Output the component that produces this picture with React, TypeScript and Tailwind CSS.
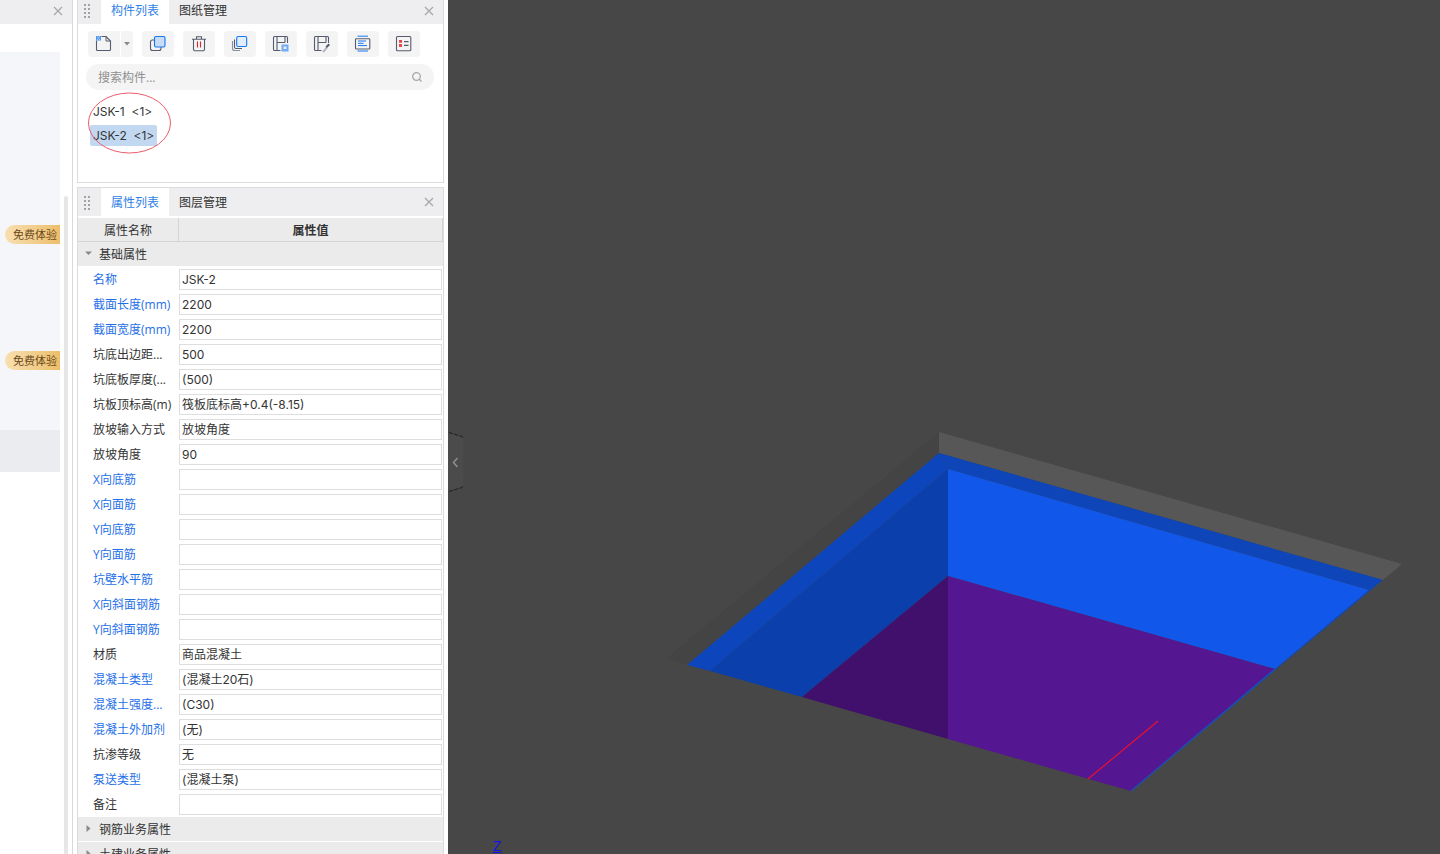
import React from "react";

const FONT = { fontFamily: '"Open Sans", "Noto Sans CJK SC", sans-serif' };
const VALUE_FONT = { fontFamily: 'Inter, "Noto Sans CJK SC", sans-serif' };

const rows: [string, string, boolean][] = [
  ["名称", "JSK-2", true],
  ["截面长度(mm)", "2200", true],
  ["截面宽度(mm)", "2200", true],
  ["坑底出边距...", "500", false],
  ["坑底板厚度(...", "(500)", false],
  ["坑板顶标高(m)", "筏板底标高+0.4(-8.15)", false],
  ["放坡输入方式", "放坡角度", false],
  ["放坡角度", "90", false],
  ["X向底筋", "", true],
  ["X向面筋", "", true],
  ["Y向底筋", "", true],
  ["Y向面筋", "", true],
  ["坑壁水平筋", "", true],
  ["X向斜面钢筋", "", true],
  ["Y向斜面钢筋", "", true],
  ["材质", "商品混凝土", false],
  ["混凝土类型", "(混凝土20石)", true],
  ["混凝土强度...", "(C30)", true],
  ["混凝土外加剂", "(无)", true],
  ["抗渗等级", "无", false],
  ["泵送类型", "(混凝土泵)", true],
  ["备注", "", false],
];

const S = "#565c6e";
const B = "#1677ee";

function Close() {
  return (
    <svg width="10" height="10" viewBox="0 0 10 10" className="shrink-0">
      <path d="M1 1L9 9M9 1L1 9" stroke="#a6a6a6" strokeWidth="1.2" />
    </svg>
  );
}

function Grip() {
  return (
    <svg width="6" height="14" viewBox="0 0 6 14" className="shrink-0">
      {[0, 4, 8, 12].map((y) =>
        [0, 4].map((x) => <rect key={`${x}-${y}`} x={x} y={y} width="2" height="2" fill="#a3a3a3" />)
      )}
    </svg>
  );
}

function Tabs({ a, b, shift }: { a: string; b: string; shift: string }) {
  return (
    <>
      <div className={`w-[23px] h-full flex items-center pl-[6px] ${shift}`}>
        <Grip />
      </div>
      <div className={`w-[68px] h-full bg-white text-[#2f7fe6] flex items-center justify-center ${shift}`}>{a}</div>
      <div className={`px-[10px] text-[#333] flex items-center h-full ${shift}`}>{b}</div>
    </>
  );
}

function Btn({ children, className = "" }: { children: React.ReactNode; className?: string }) {
  return (
    <div className={`w-[32px] h-[26px] rounded-[4px] bg-[#f4f4f5] flex items-center justify-center ${className}`}>
      <svg width="20" height="20" viewBox="0 0 20 20" fill="none">
        {children}
      </svg>
    </div>
  );
}

function HBox() {
  return (
    <>
      <path d="M16.5 9V3.5a1 1 0 0 0-1-1H3.5a1 1 0 0 0-1 1v12a1 1 0 0 0 1 1H9.5" stroke={S} strokeWidth="1.1" />
      <path d="M6 2.5V16.5M6 8.5h8M14 2.5V8.5" stroke={S} strokeWidth="1.1" />
    </>
  );
}

function Toolbar() {
  return (
    <div className="flex items-center h-[26px] pl-[10px] mt-[7px]">
      <div className="h-[26px] flex rounded-[4px] bg-[#f4f4f5] w-[45px]">
        <div className="w-[33px] border-r border-white flex items-center justify-center">
          <svg width="20" height="20" viewBox="0 0 20 20" fill="none">
            <path d="M7.5 2.5H12L16.5 7V15.5a1 1 0 0 1-1 1H3.5a1 1 0 0 1-1-1V6.5" stroke={S} strokeWidth="1.1" />
            <path d="M12 2.5V7H16.5" stroke={S} strokeWidth="1" />
            <rect x="2" y="2" width="5" height="4.5" fill="#4f96f2" />
            <path d="M3 3h1M5 3h1M4 4.2h1M3 5.4h1M5 5.4h1" stroke="#cfe2fb" strokeWidth="0.8" />
          </svg>
        </div>
        <div className="flex-1 flex items-center justify-center">
          <svg width="6" height="4" viewBox="0 0 6 4">
            <path d="M0 0H6L3 3.5Z" fill="#8a8a8a" />
          </svg>
        </div>
      </div>
      <Btn className="ml-[9px]">
        <rect x="2.5" y="6" width="10.5" height="10.5" rx="2" stroke={S} strokeWidth="1.1" />
        <rect x="6.5" y="2.5" width="10.5" height="10.5" rx="1.5" fill="#c8dcf7" stroke={B} strokeWidth="1.1" />
      </Btn>
      <Btn className="ml-[9px]">
        <path d="M3 5.2h14M7.5 5V2.8h5V5M4.5 5.2V15.3a1.5 1.5 0 0 0 1.5 1.5h8a1.5 1.5 0 0 0 1.5-1.5V5.2" stroke={S} strokeWidth="1.1" />
        <path d="M8.5 7.5v6M11.5 7.5v6" stroke="#e0262c" strokeWidth="1.1" />
      </Btn>
      <Btn className="ml-[9px]">
        <path d="M2.5 7v7.5a2 2 0 0 0 2 2H10" stroke="#8b90a0" strokeWidth="1.1" />
        <path d="M4.5 5.5v7.5a1.5 1.5 0 0 0 1.5 1.5H12" stroke={S} strokeWidth="1.1" />
        <rect x="6.7" y="2.5" width="10" height="10" rx="1.5" fill="#e3eefc" stroke={B} strokeWidth="1.1" />
      </Btn>
      <Btn className="ml-[9px]">
        <HBox />
        <path d="M10.5 10.5h7v7h-7z" fill="#73aaf2" />
        <path d="M12.5 12.5h3v2.5h-3z" fill="#e3eefc" />
      </Btn>
      <Btn className="ml-[9px]">
        <HBox />
        <path d="M11 18l4-4.5" stroke="#b3b8c4" strokeWidth="2" />
        <path d="M13.5 12.5l3-3 1.5 1.5-3 3z" fill="#565c6e" />
      </Btn>
      <Btn className="ml-[9px]">
        <rect x="2.5" y="4.7" width="14.3" height="10.3" rx="0.8" stroke={S} strokeWidth="1.1" />
        <path d="M4.5 2.2h10.5M4.5 17h10.5M5 7h8M5 9.3h5.5M5 11.6h9" stroke={B} strokeWidth="1" />
      </Btn>
      <Btn className="ml-[9px]">
        <rect x="2.5" y="2.5" width="14.3" height="14.3" rx="1" stroke={S} strokeWidth="1.1" />
        <rect x="5" y="6" width="3" height="2.8" fill="#e8484d" />
        <rect x="5" y="10" width="3" height="3" fill="#e8484d" />
        <path d="M10 7.6h4.5M10 11.4h4.5" stroke={S} strokeWidth="1.1" />
      </Btn>
    </div>
  );
}

function Badge() {
  return (
    <div className="w-[55px] ml-[5px] h-[19px] rounded-l-full bg-gradient-to-r from-[#f8dfb0] to-[#edbe6a] text-[#6b4a1a] text-[11px] flex items-center pl-[8px] whitespace-nowrap overflow-hidden">
      免费体验
    </div>
  );
}

function LeftColumn() {
  return (
    <div className="w-[73px] h-full shrink-0 border-r border-[#d9d9d9] flex flex-col">
      <div className="h-[24px] bg-[#eeeef0] flex items-center justify-end pr-[9px] pb-[3px] shrink-0">
        <Close />
      </div>
      <div className="flex-1 flex min-h-0">
        <div className="w-[60px] shrink-0 pt-[28px] flex flex-col">
          <div className="h-[378px] bg-[#f5f6fa] pt-[173px]">
            <Badge />
            <div className="h-[107px]" />
            <Badge />
          </div>
          <div className="h-[42px] bg-[#ebecef]" />
          <div className="flex-1 bg-white" />
        </div>
        <div className="flex-1 pt-[172px] pl-[4px]">
          <div className="w-[4px] h-full rounded-t-[2px] bg-[#e6e6e6]" />
        </div>
      </div>
    </div>
  );
}

function ComponentPanel() {
  return (
    <div className="h-[183px] shrink-0 border border-t-0 border-[#dcdcdc] flex flex-col relative">
      <div className="h-[24px] bg-[#eeeef0] flex items-center shrink-0">
        <Tabs a="构件列表" b="图纸管理" shift="pb-[3px]" />
        <div className="ml-auto pr-[9px] pb-[3px] flex items-center">
          <Close />
        </div>
      </div>
      <Toolbar />
      <div className="ml-[8px] mr-[9px] mt-[7px] h-[26px] rounded-full bg-[#f4f4f4] flex items-center pl-[12px] pr-[11px] text-[#8f8f8f]">
        <span className="pt-[1px]">搜索构件...</span>
        <svg width="12" height="12" viewBox="0 0 12 12" fill="none" className="ml-auto">
          <circle cx="5.5" cy="5.5" r="3.8" stroke="#a9a9a9" strokeWidth="1.3" />
          <path d="M8.3 8.3L10.5 10.5" stroke="#a9a9a9" strokeWidth="1.3" />
        </svg>
      </div>
      <div className="mt-[10px] ml-[12px] text-[#333] flex flex-col items-start" style={VALUE_FONT}>
        <div className="h-[24px] flex items-center px-[3px] whitespace-nowrap">JSK-1&nbsp;&nbsp;&lt;1&gt;</div>
        <div className="h-[21px] mt-[1px] flex items-center px-[3px] rounded-[2px] bg-[#c1d8f0] whitespace-nowrap">JSK-2&nbsp;&nbsp;&lt;1&gt;</div>
      </div>
      <svg className="absolute left-[9px] top-[92px]" width="86" height="64" viewBox="0 0 86 64" fill="none">
        <ellipse cx="42.5" cy="31" rx="41" ry="30" stroke="#ec5a6c" strokeWidth="1" />
      </svg>
    </div>
  );
}

function Section({ title, open }: { title: string; open?: boolean }) {
  return (
    <div className="h-[24px] bg-[#ebebeb] flex items-center shrink-0 text-[#333]">
      <div className="w-[21px] flex justify-center">
        {open ? (
          <svg width="7" height="5" viewBox="0 0 7 5" className="mb-[2px]">
            <path d="M0 0.5H7L3.5 4Z" fill="#8a8a8a" />
          </svg>
        ) : (
          <svg width="5" height="7" viewBox="0 0 5 7" className="mb-[2px]">
            <path d="M0.5 0V7L4.5 3.5Z" fill="#8a8a8a" />
          </svg>
        )}
      </div>
      <span className="pt-[1px]">{title}</span>
    </div>
  );
}

function PropertyPanel() {
  return (
    <div className="mt-[4px] flex-1 min-h-0 border border-[#dcdcdc] border-b-0 flex flex-col overflow-hidden">
      <div className="h-[28px] bg-[#eeeef0] flex items-center shrink-0">
        <Tabs a="属性列表" b="图层管理" shift="pt-[1px]" />
        <div className="ml-auto pr-[9px] flex items-center">
          <Close />
        </div>
      </div>
      <div className="h-[24px] mt-[2px] bg-[#ebebeb] border-b border-r border-[#d4d4d4] flex shrink-0 text-[#333]">
        <div className="w-[101px] border-r border-[#d4d4d4] flex items-center justify-center pt-[2px]">属性名称</div>
        <div className="flex-1 flex items-center justify-center font-semibold pt-[2px]">属性值</div>
      </div>
      <Section title="基础属性" open />
      <div className="flex flex-col pt-[1px] shrink-0">
        {rows.map(([label, value, blue]) => (
          <div key={label} className="h-[25px] flex items-center">
            <div className={`w-[101px] pl-[15px] whitespace-nowrap shrink-0 ${blue ? "text-[#1f6fe8]" : "text-[#333]"}`}>
              {label}
            </div>
            <div
              className="w-[263px] h-[21px] border border-[#dedede] flex items-center pl-[2px] text-[#333] whitespace-nowrap overflow-hidden"
              style={VALUE_FONT}
            >
              {value}
            </div>
          </div>
        ))}
      </div>
      <div className="flex flex-col gap-[1px] shrink-0">
        <Section title="钢筋业务属性" />
        <Section title="土建业务属性" />
      </div>
    </div>
  );
}

function Scene() {
  const o = (pts: number[][]) => pts.map(([x, y]) => `${x - 448},${y}`).join(" ");
  return (
    <div className="flex-1 h-full bg-[#474747] relative overflow-hidden">
      <svg width="992" height="854" viewBox="0 0 992 854" className="block">
        <polygon points={o([[939, 432], [667, 658], [687, 665], [939, 453]])} fill="#444444" />
        <polygon points={o([[939, 432], [1402, 564], [1383, 580], [939, 453]])} fill="#575757" />
        <polygon points={o([[939, 453], [1383, 580], [1369, 590], [948, 469]])} fill="#0e45b8" />
        <polygon points={o([[939, 453], [687, 665], [710, 671], [948, 469]])} fill="#0d45bc" />
        <polygon points={o([[948, 469], [710, 671], [802, 697], [948, 576]])} fill="#0b3fac" />
        <polygon points={o([[948, 469], [1369, 590], [1275, 669], [948, 576]])} fill="#1157ea" />
        <polygon points={o([[1369, 590], [1383, 580], [1131, 791], [1131, 791]])} fill="#1048bb" />
        <polygon points={o([[948, 576], [802, 697], [948, 739]])} fill="#40106c" />
        <polygon points={o([[948, 576], [1275, 669], [1131, 791], [948, 739]])} fill="#541691" />
        <line x1={1275 - 448} y1="669" x2={1131 - 448} y2="791" stroke="#1a4fb5" strokeWidth="1.4" />
        <line x1={1088 - 448} y1="779" x2={1158 - 448} y2="721" stroke="#f0102a" strokeWidth="1.1" />
      </svg>
      <div className="absolute left-0 top-[432px] w-[17px] h-[60px]">
        <svg width="17" height="60" viewBox="0 0 17 60" fill="none">
          <path d="M0 0.5L13 4.5L15.5 7V53L13 55.5L0 59.5Z" fill="#4b4b4b" />
          <path d="M1 0.5L14 4.5L15.5 6.5M1 59.5L14 55.5L15.5 53.5" stroke="#1e1e1e" strokeWidth="1" strokeDasharray="4 1.5" />
          <path d="M9.5 26L5.5 30.5L9.5 35" stroke="#8e8e8e" strokeWidth="1.5" />
        </svg>
      </div>
      <div className="absolute left-[45px] top-[836px] text-[14px] leading-[20px] text-[#1414e6] underline" style={{ fontFamily: '"Liberation Sans", sans-serif' }}>
        Z
      </div>
    </div>
  );
}

export default function App() {
  return (
    <div className="w-[1440px] h-[854px] flex overflow-hidden bg-white text-[12px] leading-[16px]" style={FONT}>
      <LeftColumn />
      <div className="w-[375px] h-full shrink-0 flex">
        <div className="w-[367px] ml-[4px] h-full flex flex-col">
          <ComponentPanel />
          <PropertyPanel />
        </div>
        <div className="flex-1" />
      </div>
      <Scene />
    </div>
  );
}
